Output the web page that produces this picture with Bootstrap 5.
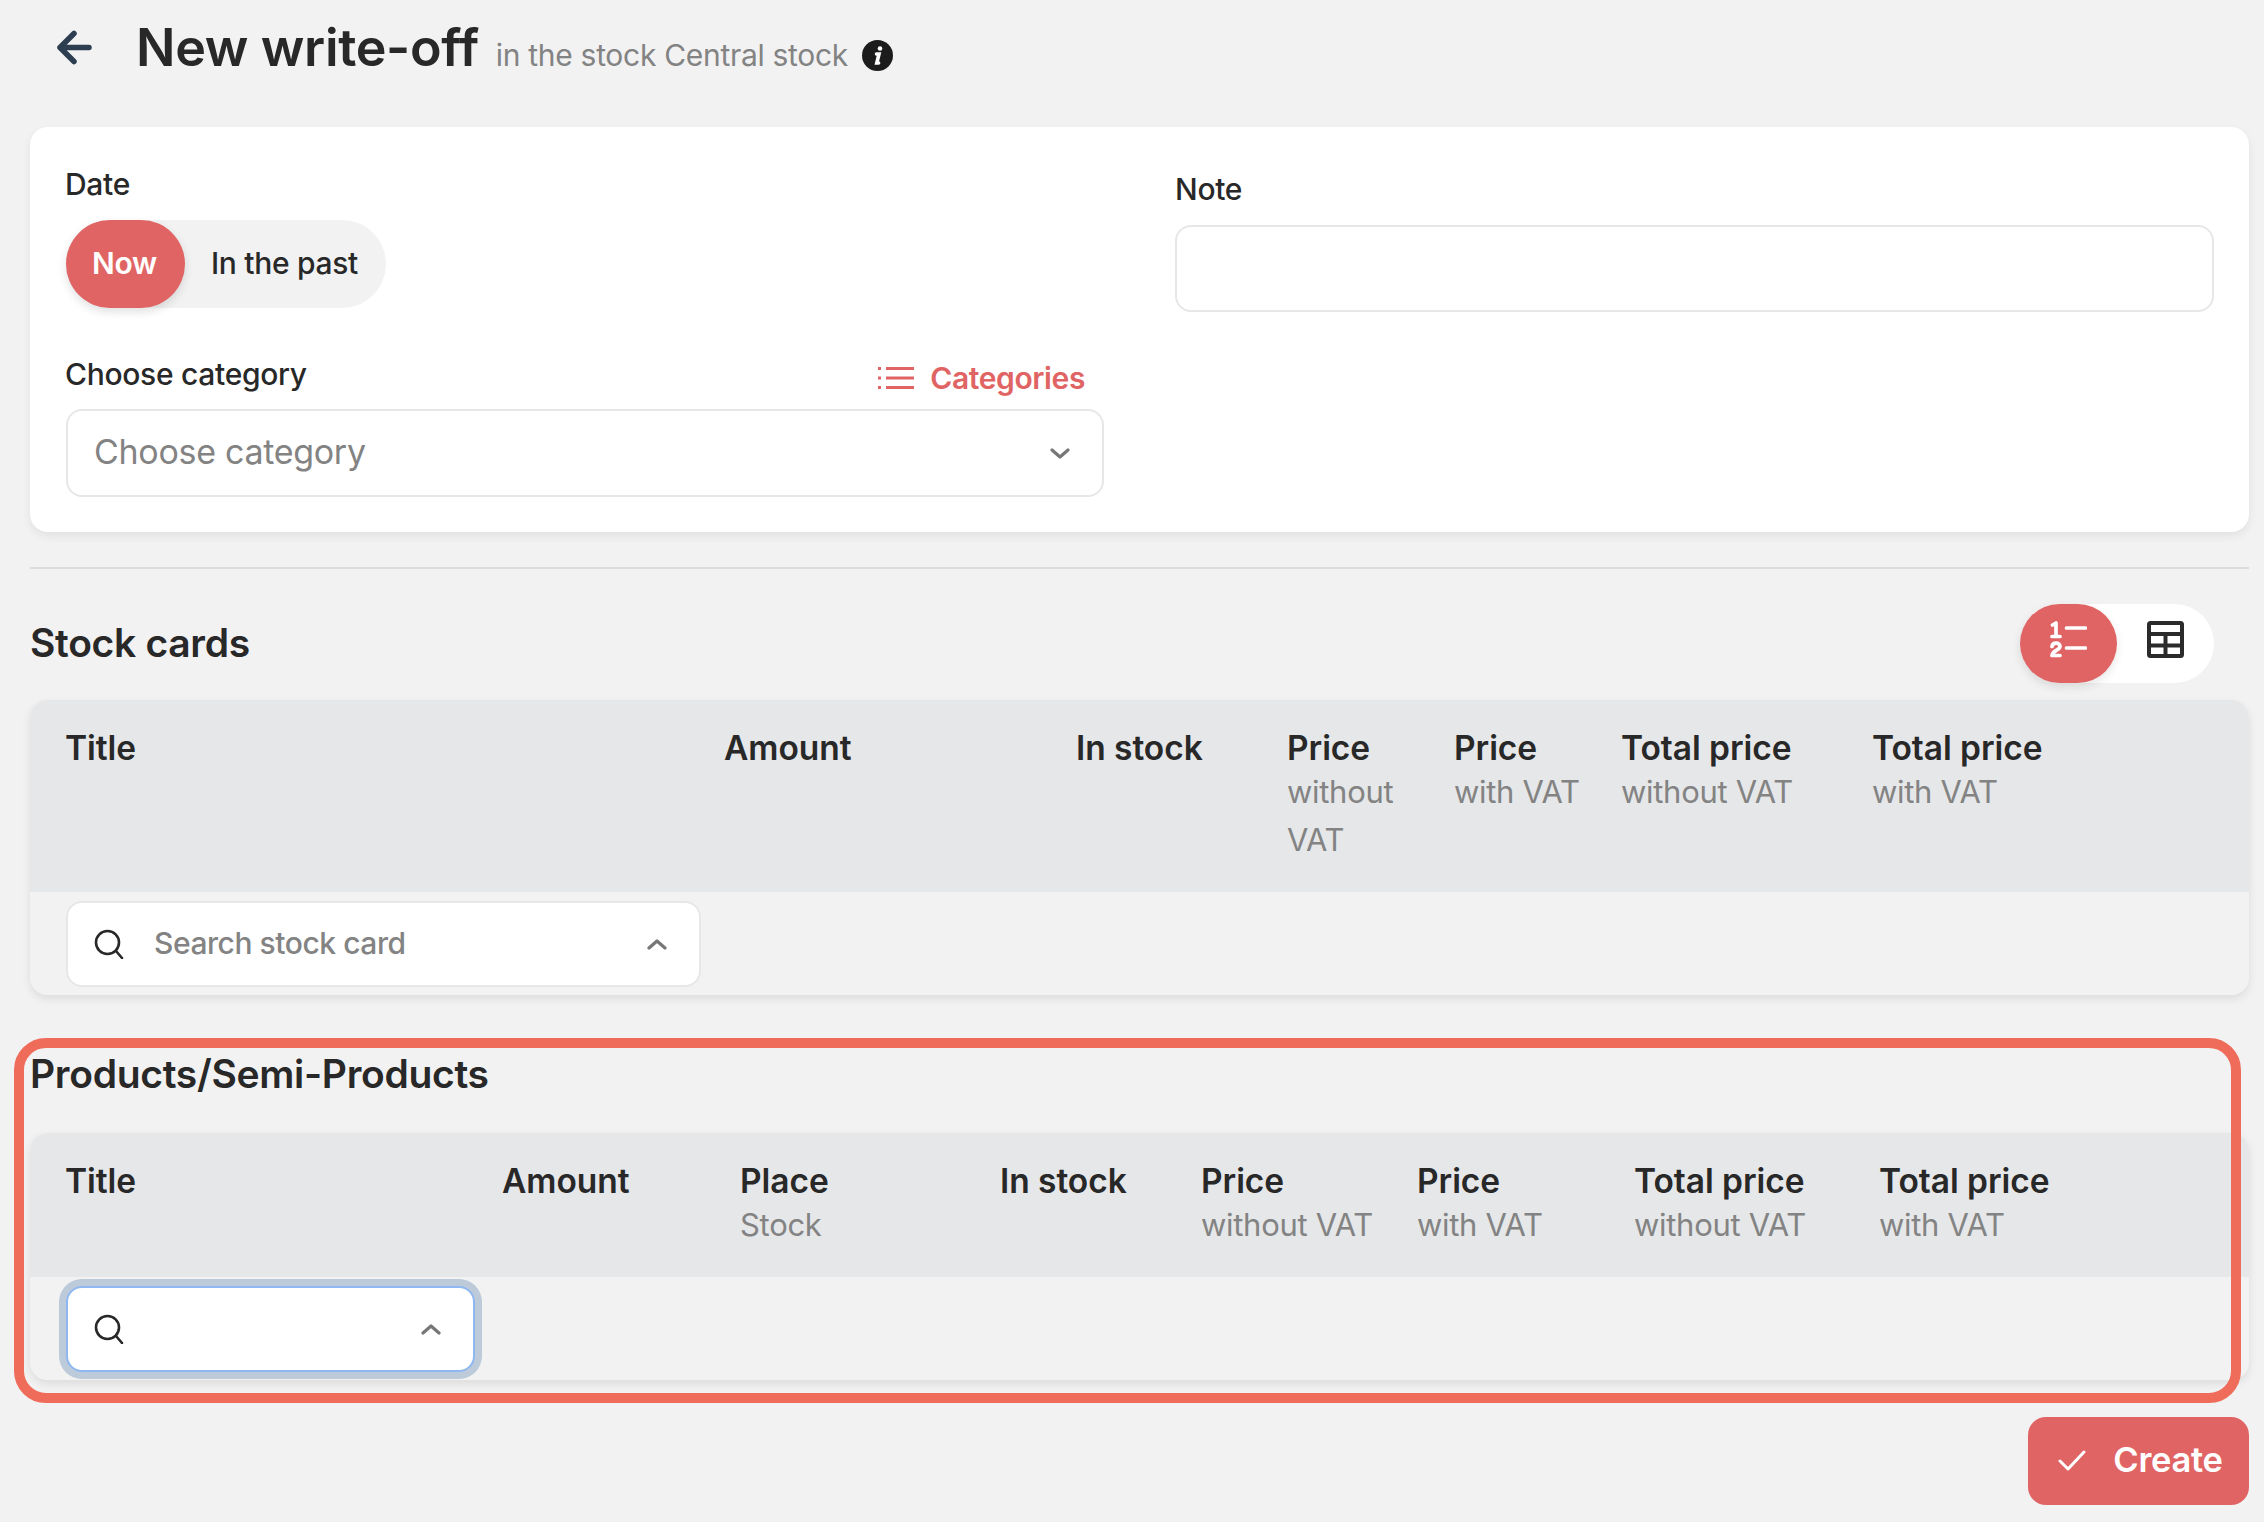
<!doctype html>
<html lang="en">
<head>
<meta charset="utf-8">
<title>New write-off</title>
<link rel="stylesheet" href="https://cdn.jsdelivr.net/npm/bootstrap@5.3.0/dist/css/bootstrap.min.css">
<style>
:root{--red:#e06464;--ink:#282828;--mute:#838383;--line:#e6e7e9;}
html,body{background:#f2f2f2;}
body{font-family:"Inter","Liberation Sans",sans-serif;color:var(--ink);font-size:30px;padding:0 15px 0 30px;min-height:1522px;position:relative;}
.page-top{height:127px;padding-top:16px;padding-left:26px;}
.back-ic{width:39px;height:39px;margin-right:41px;align-self:flex-start;margin-top:12px;}
.page-title{font-size:52px;font-weight:600;margin:0;line-height:64px;letter-spacing:-.35px;}
.page-sub{font-size:30px;color:var(--mute);margin-left:17px;letter-spacing:-.3px;}
.info-ic{width:31px;height:31px;margin-left:14px;align-self:flex-start;margin-top:24px;}
.form-sheet{background:#fff;border-radius:18px;box-shadow:0 4px 10px rgba(0,0,0,.07);padding:36px 36px 35px;display:grid;grid-template-columns:1038px 1039px;column-gap:71px;height:405px;}
.fld-label{font-size:30px;font-weight:500;line-height:42px;margin:0 0 15px -1px;letter-spacing:-.3px;}
.note-col{padding-top:5px;}
.note-col .fld-label{margin-left:0;}
.switch{background:#f2f2f2;border-radius:44px;height:88px;}
.switch .btn{height:88px;border:0;border-radius:44px;font-size:30px;font-weight:500;padding:0 28px 2px 26px;color:var(--ink);letter-spacing:-.3px;}
.switch .btn.is-on{background:var(--red);color:#fff;box-shadow:0 4px 10px rgba(0,0,0,.12);font-weight:600;}
.cat-head{margin-top:45px;margin-bottom:10px;height:46px;}
.cat-head .fld-label{margin:0 0 0 -1px;}
.cat-link{color:var(--red);font-weight:600;font-size:30px;line-height:42px;text-decoration:none;margin-right:19px;letter-spacing:-.4px;}
.list-ic{width:38px;height:24px;margin-right:15px;}
.form-control.tall,.form-select.tall{height:87px;border:2px solid var(--line);border-radius:16px;font-size:34px;color:var(--mute);box-shadow:none;padding-left:26px;padding-top:4px;padding-bottom:8px;letter-spacing:-.3px;}
.form-select.tall{height:88px;background-image:url("data:image/svg+xml,%3csvg xmlns='http://www.w3.org/2000/svg' viewBox='0 0 20 11'%3e%3cpath fill='none' stroke='%23777' stroke-width='3.2' stroke-linecap='round' stroke-linejoin='round' d='M2 2l8 7 8-7'/%3e%3c/svg%3e");background-size:20px 11px;background-position:right 32px center;}
.divider{height:2px;background:#dcdcdc;margin:35px 0;}
.sec-title{font-size:39px;font-weight:600;line-height:46px;margin:0;letter-spacing:-.3px;}
.stock-head{height:79px;margin-bottom:17px;padding-right:35px;}
.stock-head .sec-title{margin-bottom:2px;}
.view-switch{background:#fff;border-radius:40px;height:79px;width:194px;}
.view-switch .btn{height:79px;width:97px;border:0;border-radius:40px;padding:0;flex:none;}
.view-switch .btn.is-on{background:var(--red);box-shadow:0 4px 10px rgba(0,0,0,.1);}
.view-switch svg{width:37px;height:37px;margin-bottom:8px;}
.data-sheet{border-radius:18px;overflow:hidden;box-shadow:0 4px 10px rgba(0,0,0,.09);background:#f2f2f2;}
.data-table{--bs-table-bg:transparent;table-layout:fixed;width:100%;margin:0;}
.data-table th{background:var(--line);border:0;padding:28px 12px 28px 12px;font-weight:600;font-size:33.500px;line-height:40px;vertical-align:top;letter-spacing:-.05px;color:var(--ink);}
.data-table th:first-child{padding-left:35px;}
.data-table td:first-child{padding-left:36px;}
.data-table th span{display:block;font-weight:400;font-size:31px;letter-spacing:-.3px;color:var(--mute);line-height:48px;margin-top:0;}
.data-table td{border:0;padding:9px 12px 8px;background:#f2f2f2;}
.c1a{width:682px}.c1b{width:352px}.c1c{width:211px}.c1d{width:167px}.c1e{width:167px}.c1f{width:251px}
.c2a{width:460px}.c2b{width:238px}.c2c{width:260px}.c2d{width:201px}.c2e{width:216px}.c2f{width:217px}.c2g{width:245px}
.picker{height:86px;border:2px solid var(--line);border-radius:16px;background:#fff;padding:0 32px 0 26px;}
.picker .form-control{border:0;background:transparent;box-shadow:none;font-size:30px;font-weight:500;padding:0 0 2px 30px;height:50px;letter-spacing:-.45px;}
.picker .form-control::placeholder{color:var(--mute);}
.picker.wide{width:635px;}
.picker.slim{width:409px;border-color:#8fb8f2;box-shadow:0 0 0 7px #bccad9;}
.search-ic{width:30px;height:30px;flex:none;}
.chev-ic{width:20px;height:11px;flex:none;margin-left:auto;}
.prod-sec{margin-top:56px;}
.prod-sec .sec-title{margin-bottom:36px;}
.flag-frame{position:absolute;left:14px;top:1038px;width:2227px;height:365px;border:10px solid #ef6c5b;border-radius:32px;pointer-events:none;}
.foot-bar{margin-top:37px;}
.go-btn{background:var(--red);color:#fff;border:0;width:221px;height:88px;border-radius:18px;font-size:34.500px;font-weight:600;padding:0 0 2px 4px;letter-spacing:-.3px;}
.go-btn svg{width:28px;height:22px;margin-right:27px;}
.go-btn:hover{background:var(--red);color:#fff;}
</style>
</head>
<body>
<header class="page-top d-flex align-items-baseline">
  <svg class="back-ic" viewBox="0 0 39 39" fill="none" stroke="#2c3e50" stroke-width="5.500" stroke-linecap="round" stroke-linejoin="round"><path d="M33 19.500H4M18 5.500 4 19.500 18 33.500"/></svg>
  <h1 class="page-title">New write-off</h1>
  <span class="page-sub">in the stock Central stock</span>
  <svg class="info-ic" viewBox="0 0 31 31"><circle cx="15.500" cy="15.500" r="15.500" fill="#1c1c1c"/><path fill="none" stroke="#fff" stroke-width="3.600" stroke-linecap="round" d="M14.500 14h2.500l-2.200 9h1.800"/><circle cx="18" cy="8.500" r="2.300" fill="#fff"/></svg>
</header>

<section class="form-sheet">
  <div>
    <p class="fld-label">Date</p>
    <div class="switch d-inline-flex">
      <button type="button" class="btn is-on">Now</button>
      <button type="button" class="btn">In the past</button>
    </div>
    <div class="cat-head d-flex justify-content-between">
      <p class="fld-label align-self-start">Choose category</p>
      <a href="#" class="cat-link d-flex align-items-center align-self-end">
        <svg class="list-ic" viewBox="0 0 38 24" fill="none" stroke="#e06464" stroke-width="3"><path d="M9 2.500h28M9 12h28M9 21.500h28"/><path d="M1 2.500h3M1 12h3M1 21.500h3"/></svg>Categories
      </a>
    </div>
    <select class="form-select tall" aria-label="Choose category"><option>Choose category</option></select>
  </div>
  <div class="note-col">
    <label class="fld-label d-block" for="note">Note</label>
    <input id="note" class="form-control tall" type="text">
  </div>
</section>

<div class="divider"></div>

<div class="stock-head d-flex justify-content-between align-items-center">
  <h2 class="sec-title">Stock cards</h2>
  <div class="view-switch d-flex">
    <button type="button" class="btn is-on d-flex align-items-center justify-content-center" aria-label="List view">
      <svg viewBox="0 0 37 37" fill="none" stroke="#fff" stroke-width="3.700" stroke-linecap="round" stroke-linejoin="round"><path d="M2.500 4 6 2v13M2 15.500h8M16.500 7h19M16.500 27h19"/><path d="M2 25.500c.5-4.500 8-4.500 8 0 0 3.500-7.500 4-8 9h8"/></svg>
    </button>
    <button type="button" class="btn d-flex align-items-center justify-content-center" aria-label="Table view">
      <svg viewBox="0 0 37 37" fill="none" stroke="#2b2b2b" stroke-width="4" stroke-linejoin="round"><rect x="2" y="2" width="33" height="33" rx="1.500"/><path d="M2 13h33M2 24.500h33M18.500 13v22"/></svg>
    </button>
  </div>
</div>

<div class="data-sheet">
  <table class="table data-table">
    <colgroup><col class="c1a"><col class="c1b"><col class="c1c"><col class="c1d"><col class="c1e"><col class="c1f"><col></colgroup>
    <thead><tr>
      <th>Title</th><th>Amount</th><th>In stock</th>
      <th>Price<span>without VAT</span></th>
      <th>Price<span>with VAT</span></th>
      <th>Total price<span>without VAT</span></th>
      <th>Total price<span>with VAT</span></th>
    </tr></thead>
    <tbody><tr><td colspan="7">
      <div class="picker wide d-flex align-items-center">
        <svg class="search-ic" viewBox="0 0 30 30" fill="none" stroke="#282828" stroke-width="2.600" stroke-linecap="round"><circle cx="13.500" cy="13.500" r="11.500"/><path d="M22 22l6 7"/></svg>
        <input class="form-control" type="text" placeholder="Search stock card" aria-label="Search stock card">
        <svg class="chev-ic" viewBox="0 0 20 11" fill="none" stroke="#777" stroke-width="3.200" stroke-linecap="round" stroke-linejoin="round"><path d="M2 9l8-7 8 7"/></svg>
      </div>
    </td></tr></tbody>
  </table>
</div>

<section class="prod-sec">
  <h2 class="sec-title">Products/Semi-Products</h2>
  <div class="data-sheet">
    <table class="table data-table">
      <colgroup><col class="c2a"><col class="c2b"><col class="c2c"><col class="c2d"><col class="c2e"><col class="c2f"><col class="c2g"><col></colgroup>
      <thead><tr>
        <th>Title</th><th>Amount</th>
        <th>Place<span>Stock</span></th>
        <th>In stock</th>
        <th>Price<span>without VAT</span></th>
        <th>Price<span>with VAT</span></th>
        <th>Total price<span>without VAT</span></th>
        <th>Total price<span>with VAT</span></th>
      </tr></thead>
      <tbody><tr><td colspan="8">
        <div class="picker slim d-flex align-items-center">
          <svg class="search-ic" viewBox="0 0 30 30" fill="none" stroke="#282828" stroke-width="2.600" stroke-linecap="round"><circle cx="13.500" cy="13.500" r="11.500"/><path d="M22 22l6 7"/></svg>
          <svg class="chev-ic" viewBox="0 0 20 11" fill="none" stroke="#777" stroke-width="3.200" stroke-linecap="round" stroke-linejoin="round"><path d="M2 9l8-7 8 7"/></svg>
        </div>
      </td></tr></tbody>
    </table>
  </div>
</section>

<div class="flag-frame"></div>

<div class="foot-bar d-flex justify-content-end">
  <button type="button" class="btn go-btn d-flex align-items-center justify-content-center">
    <svg viewBox="0 0 28 22" fill="none" stroke="#fff" stroke-width="3" stroke-linecap="round" stroke-linejoin="round"><path d="M2 12l8 8L26 3"/></svg>Create
  </button>
</div>
<script src="https://cdn.jsdelivr.net/npm/bootstrap@5.3.0/dist/js/bootstrap.bundle.min.js"></script>
</body>
</html>
